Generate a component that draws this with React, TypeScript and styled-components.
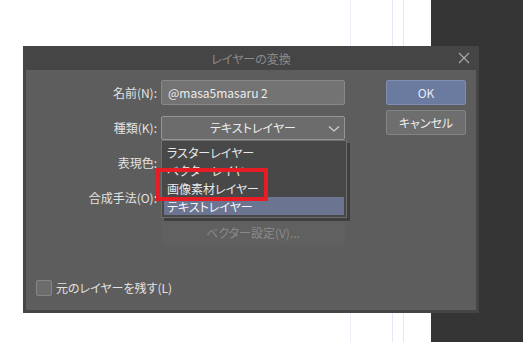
import React from 'react';
import styled, { createGlobalStyle } from 'styled-components';

const GlobalStyle = createGlobalStyle`
  html, body {
    margin: 0;
    padding: 0;
  }
  body {
    width: 523px;
    height: 342px;
    overflow: hidden;
    font-family: "Noto Sans CJK JP", "Noto Sans", sans-serif;
    font-size: 12px;
    font-feature-settings: "palt";
  }
`;

const Screen = styled.div`
  position: relative;
  display: flex;
  width: 523px;
  height: 342px;
`;

const Canvas = styled.div`
  flex: 0 0 431px;
  background:
    linear-gradient(to right, transparent 350px, #eeeef8 350px, #eeeef8 351px, transparent 351px),
    linear-gradient(to right, transparent 392px, #e6e6f4 392px, #e6e6f4 393px, transparent 393px),
    linear-gradient(to right, transparent 403px, #e6e6f4 403px, #e6e6f4 404px, transparent 404px),
    #ffffff;
`;

const SidePanel = styled.div`
  flex: 1;
  background: #353535;
`;

const Dialog = styled.div`
  position: absolute;
  left: 23px;
  top: 46px;
  width: 456px;
  height: 267px;
  box-sizing: border-box;
  background: #454545;
  padding: 0 3px 3px;
  display: flex;
  flex-direction: column;
`;

const TitleBar = styled.div`
  position: relative;
  height: 24px;
  flex: 0 0 24px;
  display: flex;
  align-items: center;
  justify-content: center;
  color: #8c8c8c;
  font-size: 12px;
`;

const Close = styled.span`
  position: absolute;
  right: 6px;
  top: 6px;
  width: 12px;
  height: 12px;
  display: flex;
`;

const Body = styled.div`
  position: relative;
  flex: 1;
  background: #5d5d5d;
  display: flex;
  flex-direction: column;
  padding: 10px 0 14px 0;
  box-sizing: border-box;
`;

const Top = styled.div`
  display: flex;
`;

const Form = styled.div`
  width: 319px;
  display: flex;
  flex-direction: column;
  gap: 10px;
`;

const Row = styled.div`
  display: grid;
  grid-template-columns: 131px 184px;
  column-gap: 4px;
  height: 25px;
  align-items: center;
`;

const Label = styled.span`
  text-align: right;
  color: #e2e2e2;
  white-space: nowrap;
`;

const Field = styled.div`
  height: 25px;
  box-sizing: border-box;
  background: #737373;
  border: 1px solid #888888;
  border-radius: 2px;
  color: #ececec;
  display: flex;
  align-items: center;
  padding-left: 6px;
`;

const Combo = styled.div`
  position: relative;
  height: 24px;
  box-sizing: border-box;
  background: #6c6c6c;
  border: 1px solid #959595;
  border-radius: 2px;
  color: #ececec;
  display: flex;
  align-items: center;
  justify-content: center;
`;

const Chevron = styled.svg`
  position: absolute;
  right: 4px;
  top: 8px;
`;

const GhostButton = styled.div`
  height: 25px;
  box-sizing: border-box;
  background: #606060;
  border-radius: 2px;
  color: #8a8a8a;
  display: flex;
  align-items: center;
  justify-content: center;
`;

const Buttons = styled.div`
  margin-left: 41px;
  width: 80px;
  display: flex;
  flex-direction: column;
  gap: 5px;
`;

const Button = styled.div<{ $primary?: boolean }>`
  height: 25px;
  box-sizing: border-box;
  border-radius: 2px;
  display: flex;
  align-items: center;
  justify-content: center;
  background: ${p => (p.$primary ? '#6b7a9f' : '#6e6e6e')};
  border: 1px solid ${p => (p.$primary ? '#7f8db2' : '#848484')};
  color: ${p => (p.$primary ? '#e6eaf6' : '#ececec')};
`;

const Footer = styled.label`
  margin-top: auto;
  margin-left: 10px;
  display: flex;
  align-items: center;
  gap: 4px;
  color: #e2e2e2;
`;

const Check = styled.span`
  width: 16px;
  height: 16px;
  box-sizing: border-box;
  background: #6c6c6c;
  border: 1px solid #858585;
  border-radius: 2px;
`;

const List = styled.div`
  position: absolute;
  left: 135px;
  top: 70px;
  width: 186px;
  box-sizing: border-box;
  padding: 2px 2px;
  background: #484848;
  border: 1px solid #6e6e6e;
  box-shadow: 3px 3px 0 #3e3e3e;
`;

const Item = styled.div<{ $selected?: boolean }>`
  height: 18px;
  display: flex;
  align-items: center;
  padding-left: 3px;
  color: ${p => (p.$selected ? '#f4f4f4' : '#e8e8e8')};
  background: ${p => (p.$selected ? '#6b7592' : 'transparent')};
`;

const Highlight = styled.div`
  position: absolute;
  left: 130px;
  top: 98px;
  width: 112px;
  height: 33px;
  box-sizing: border-box;
  border: 4px solid #e61d25;
`;

export default function App() {
  return (
    <>
      <GlobalStyle />
      <Screen>
        <Canvas />
        <SidePanel />
        <Dialog>
          <TitleBar>
            レイヤーの変換
            <Close>
              <svg width="12" height="12" viewBox="0 0 12 12">
                <path d="M1 1 L11 11 M11 1 L1 11" stroke="#a8a8a8" strokeWidth="1.2" />
              </svg>
            </Close>
          </TitleBar>
          <Body>
            <Top>
              <Form>
                <Row>
                  <Label>名前(N):</Label>
                  <Field>@masa5masaru 2</Field>
                </Row>
                <Row>
                  <Label>種類(K):</Label>
                  <Combo>
                    テキストレイヤー
                    <Chevron width="12" height="8" viewBox="0 0 12 8">
                      <path d="M1 1.5 L6 6 L11 1.5" fill="none" stroke="#cfcfcf" strokeWidth="1.3" />
                    </Chevron>
                  </Combo>
                </Row>
                <Row>
                  <Label>表現色:</Label>
                  <span />
                </Row>
                <Row>
                  <Label>合成手法(O):</Label>
                  <span />
                </Row>
                <Row>
                  <span />
                  <GhostButton>ベクター設定(V)...</GhostButton>
                </Row>
              </Form>
              <Buttons>
                <Button $primary>OK</Button>
                <Button>キャンセル</Button>
              </Buttons>
            </Top>
            <Footer>
              <Check />
              元のレイヤーを残す(L)
            </Footer>
            <List>
              <Item>ラスターレイヤー</Item>
              <Item>ベクターレイヤー</Item>
              <Item>画像素材レイヤー</Item>
              <Item $selected>テキストレイヤー</Item>
            </List>
            <Highlight />
          </Body>
        </Dialog>
      </Screen>
    </>
  );
}
